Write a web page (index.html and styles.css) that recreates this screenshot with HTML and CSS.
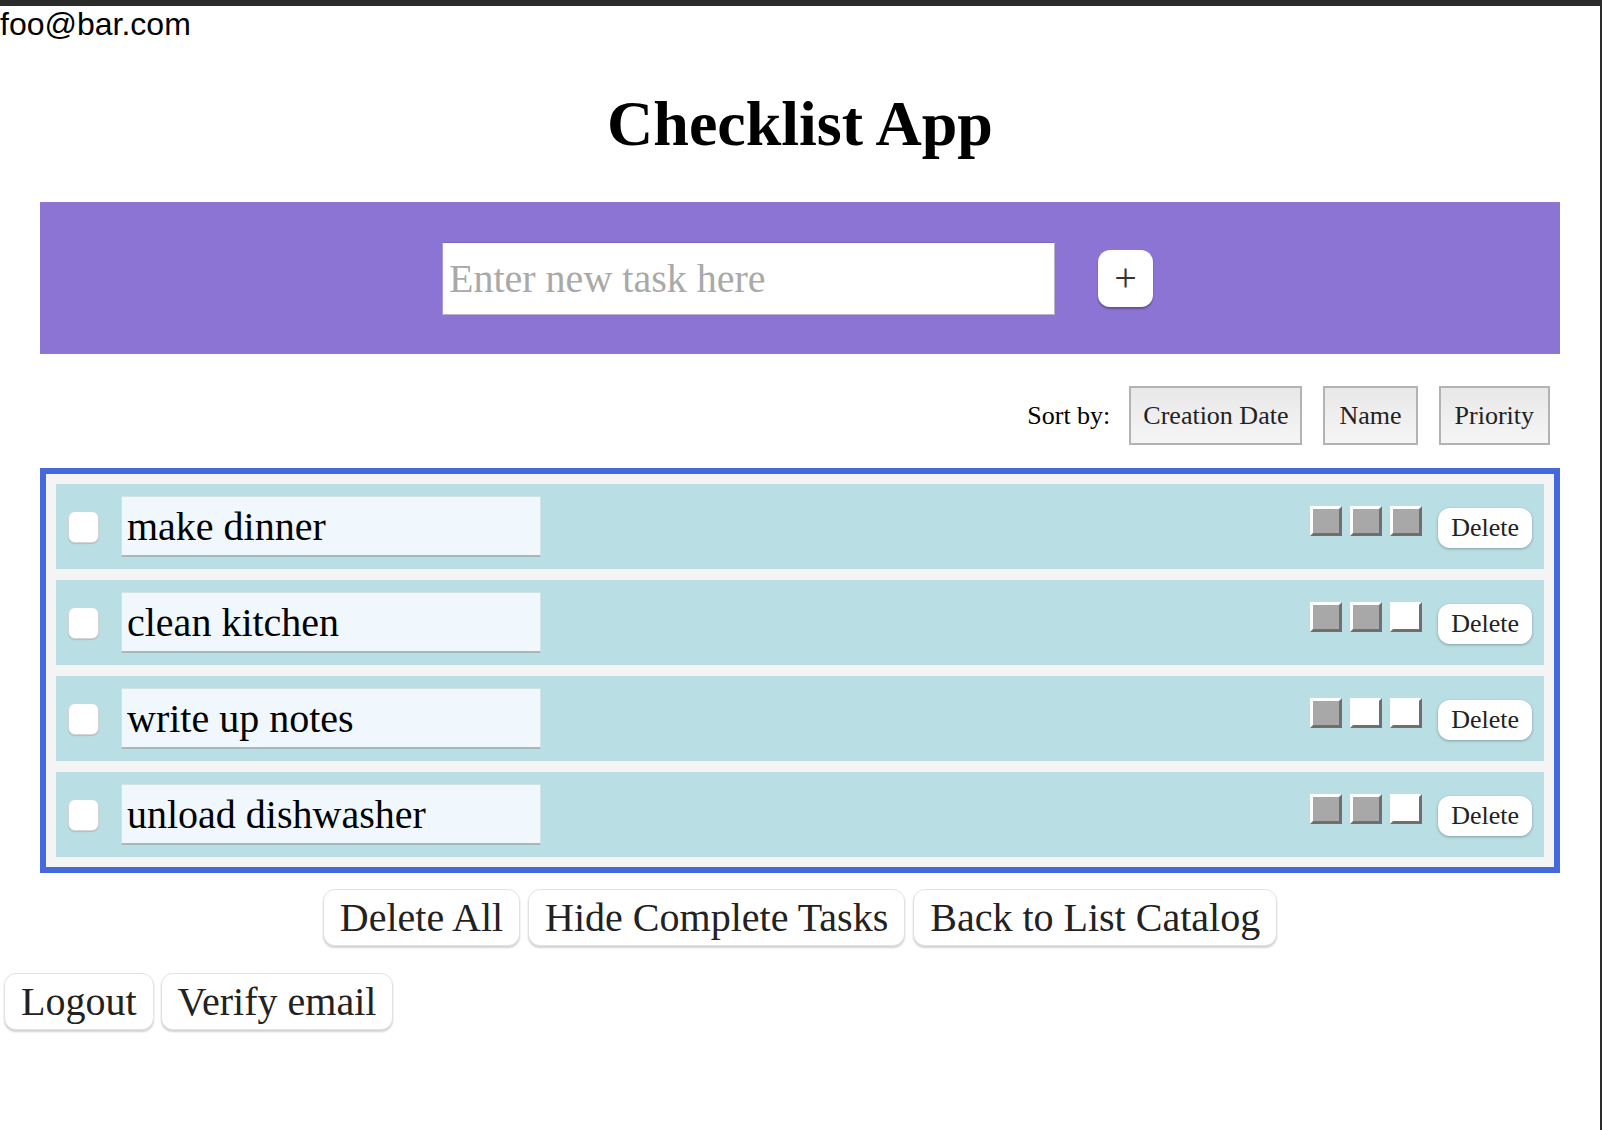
FILE: index.html
```html
<!DOCTYPE html>
<html lang="en">
<head>
<meta charset="utf-8">
<title>Checklist App</title>
<link rel="stylesheet" href="styles.css">
</head>
<body>
<div class="email">foo@bar.com</div>
<h1 class="title">Checklist App</h1>

<div class="banner">
  <input class="new-task" type="text" placeholder="Enter new task here">
  <button class="add-btn">+</button>
</div>

<div class="sort-row">
  <span class="sort-label">Sort by:</span>
  <button class="sort-btn">Creation Date</button>
  <button class="sort-btn">Name</button>
  <button class="sort-btn">Priority</button>
</div>

<div class="list">
  <div class="row">
    <span class="check"></span>
    <input class="task" type="text" value="make dinner">
    <div class="controls">
      <span class="prio on"></span><span class="prio on"></span><span class="prio on"></span>
      <button class="del">Delete</button>
    </div>
  </div>
  <div class="row">
    <span class="check"></span>
    <input class="task" type="text" value="clean kitchen">
    <div class="controls">
      <span class="prio on"></span><span class="prio on"></span><span class="prio"></span>
      <button class="del">Delete</button>
    </div>
  </div>
  <div class="row">
    <span class="check"></span>
    <input class="task" type="text" value="write up notes">
    <div class="controls">
      <span class="prio on"></span><span class="prio"></span><span class="prio"></span>
      <button class="del">Delete</button>
    </div>
  </div>
  <div class="row">
    <span class="check"></span>
    <input class="task" type="text" value="unload dishwasher">
    <div class="controls">
      <span class="prio on"></span><span class="prio on"></span><span class="prio"></span>
      <button class="del">Delete</button>
    </div>
  </div>
</div>

<div class="actions">
  <button class="big-btn">Delete All</button>
  <button class="big-btn">Hide Complete Tasks</button>
  <button class="big-btn">Back to List Catalog</button>
</div>

<div class="account">
  <button class="big-btn">Logout</button>
  <button class="big-btn">Verify email</button>
</div>
</body>
</html>
```

FILE: styles.css
```css
* { box-sizing: border-box; }

html { background: #ffffff; }

body {
  margin: 0;
  min-height: 100vh;
  background: #ffffff;
  border-top: 6px solid #2b2b2b;
  border-right: 2px solid #2b2b2b;
  font-family: "Liberation Serif", "Times New Roman", serif;
  font-size: 32px;
  color: #000;
}

.email {
  font-family: "Liberation Sans", Arial, sans-serif;
  font-size: 32px;
  line-height: 37px;
}

.title {
  margin: 45px 0 43px;
  font-size: 64px;
  line-height: 71px;
  font-weight: bold;
  text-align: center;
}

.banner {
  margin: 0 40px;
  padding-right: 5px;
  height: 152px;
  background: #8c74d4;
  display: flex;
  justify-content: center;
  align-items: center;
  gap: 43px;
}

.new-task {
  width: 613px;
  height: 73px;
  margin: 0;
  padding: 0 6px;
  border: 1px solid #b7b2c9;
  border-top-color: #7a66c0;
  border-left-color: #a89ad8;
  background: #fff;
  font-family: "Liberation Serif", "Times New Roman", serif;
  font-size: 40px;
  color: #000;
  outline: none;
}
.new-task::placeholder { color: #a9a9a9; }

.add-btn {
  width: 55px;
  height: 57px;
  padding: 0;
  border: none;
  border-radius: 12px;
  background: #fff;
  box-shadow: 0 2px 2px rgba(0,0,0,0.3);
  font-family: "Liberation Serif", "Times New Roman", serif;
  font-size: 40px;
  line-height: 1;
  color: #333;
}

.sort-row {
  margin: 32px 50px 23px 40px;
  height: 59px;
  display: flex;
  justify-content: flex-end;
  align-items: center;
  gap: 21px;
}

.sort-label {
  font-size: 26px;
  margin-right: -2px;
}

.sort-btn {
  height: 59px;
  padding: 0 14px;
  border: 2px solid #b3b3b3;
  border-radius: 0;
  background: linear-gradient(#e8e8e8, #f5f5f5);
  font-family: "Liberation Serif", "Times New Roman", serif;
  font-size: 26px;
  color: #222;
}
.sort-btn:first-of-type { padding: 0 12px; }

.list {
  margin: 0 40px;
  border: 6px solid #4569da;
  background: #f4f4f4;
  padding: 10px;
  display: flex;
  flex-direction: column;
  gap: 11px;
}

.row {
  height: 85px;
  background: #b9dee4;
  display: flex;
  align-items: center;
  padding: 0 12px;
}

.check {
  width: 31px;
  height: 32px;
  background: #fff;
  border: 1px solid #d4d4d4;
  border-radius: 7px;
  box-shadow: 0 1px 1px rgba(0,0,0,0.12);
  margin-right: 22px;
}

.task {
  width: 420px;
  height: 61px;
  margin: 0;
  padding: 0 5px;
  background: #f0f7fd;
  border: 1px solid #cfe3e7;
  border-bottom: 2px solid #a3b9bf;
  font-family: "Liberation Serif", "Times New Roman", serif;
  font-size: 40px;
  color: #000;
  outline: none;
}

.controls {
  margin-left: auto;
  align-self: flex-start;
  margin-top: 22px;
  display: flex;
  align-items: flex-start;
  gap: 8px;
}

.prio {
  width: 32px;
  height: 30px;
  background: #a8a8a8;
  border: 3px solid;
  border-color: #ffffff #6f6f6f #6f6f6f #ffffff;
}
.prio:not(.on) { background: #ffffff; }

.del {
  margin-left: 8px;
  margin-top: 2px;
  height: 40px;
  padding: 0 13px;
  border: none;
  border-radius: 12px;
  background: #fff;
  box-shadow: 0 1px 3px rgba(0,0,0,0.3);
  font-family: "Liberation Serif", "Times New Roman", serif;
  font-size: 26px;
  color: #222;
}

.actions {
  margin-top: 16px;
  display: flex;
  justify-content: center;
  gap: 8px;
}

.account {
  margin: 27px 0 0 4px;
  display: flex;
  gap: 7px;
}

.big-btn {
  height: 57px;
  padding: 0 16px;
  border: 1px solid #e2e2e2;
  border-radius: 12px;
  background: #fff;
  box-shadow: 0 2px 2px rgba(0,0,0,0.18);
  font-family: "Liberation Serif", "Times New Roman", serif;
  font-size: 40px;
  color: #222;
}
```
